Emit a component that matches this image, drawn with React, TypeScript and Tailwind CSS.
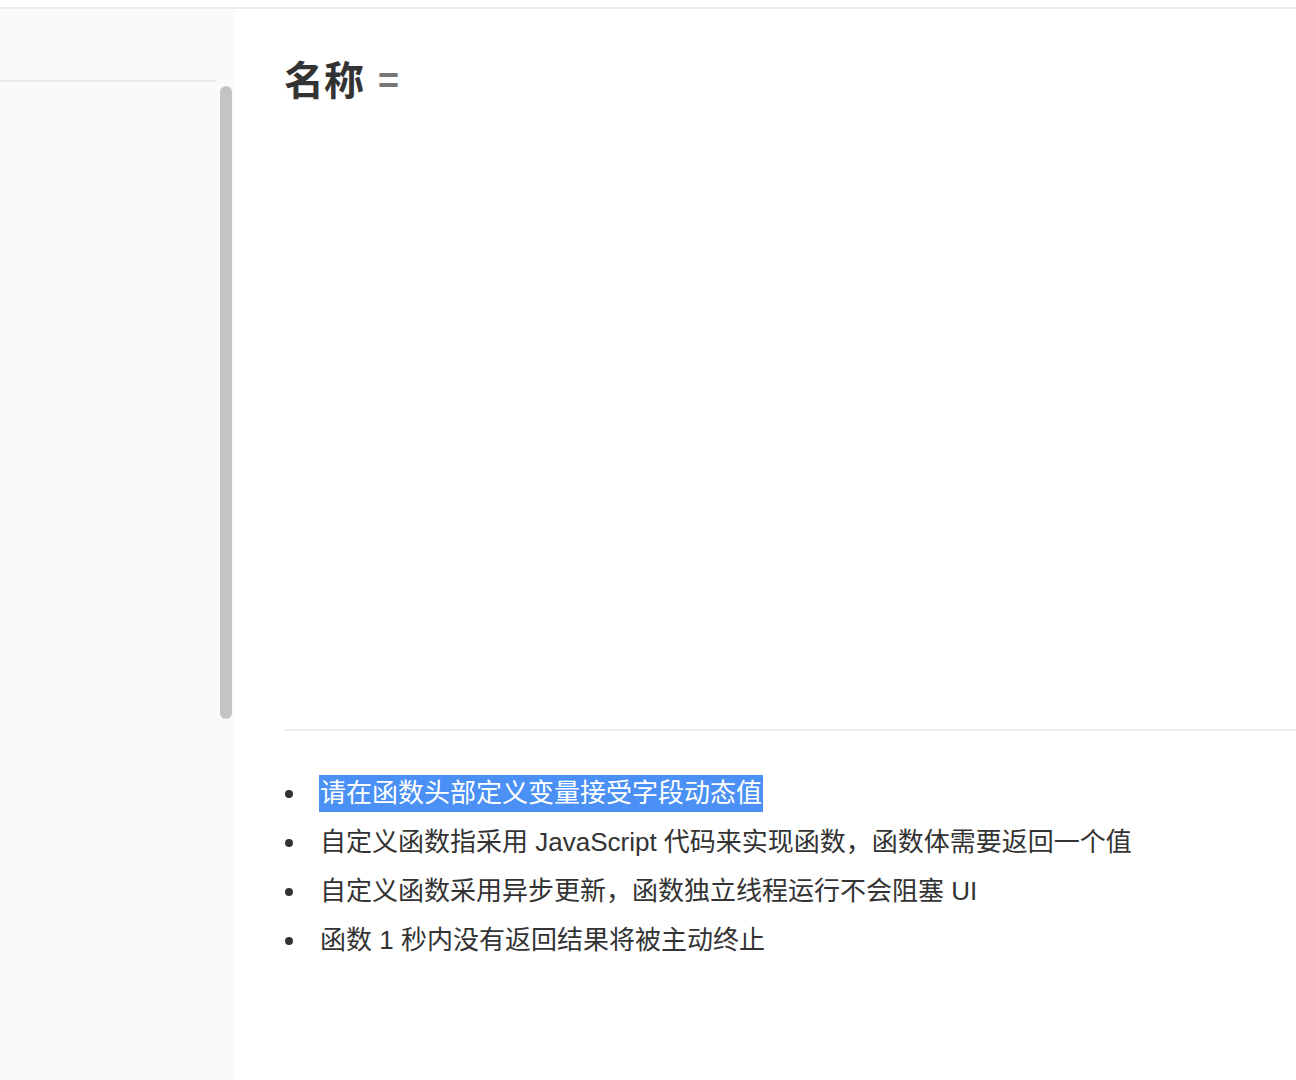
import React from "react";

const tips = [
  "请在函数头部定义变量接受字段动态值",
  "自定义函数指采用 JavaScript 代码来实现函数，函数体需要返回一个值",
  "自定义函数采用异步更新，函数独立线程运行不会阻塞 UI",
  "函数 1 秒内没有返回结果将被主动终止",
];

const App: React.FC = () => {
  return (
    <div
      className="w-[1296px] h-[1080px] bg-white flex flex-col overflow-hidden text-[#333]"
      style={{ fontFamily: '"Helvetica Neue", "Liberation Sans", "Noto Sans CJK SC", sans-serif' }}
    >
      <div className="h-[7px] shrink-0" />
      <div className="h-[2px] bg-[#ebebeb] shrink-0" />

      <div className="flex flex-1 min-h-0">
        {/* sidebar */}
        <div className="w-[235px] shrink-0 bg-[#fafafa] flex flex-col">
          <div className="h-[73px] w-[216px] border-b-2 border-[#ebebeb]" />
          <div className="flex justify-end pr-[3px] pt-[4px]">
            <div className="w-[12px] h-[633px] rounded-full bg-[#c4c4c4]" />
          </div>
        </div>

        {/* main */}
        <div className="flex-1 flex flex-col pl-[49px]">
          <div className="h-[640px] pt-[46px] shrink-0">
            <h1 className="flex items-center gap-[14px] text-[40px] font-bold leading-[52px] text-[#333]">
              名称
              <span className="text-[#777] text-[36px] font-bold">=</span>
            </h1>
          </div>
          <div className="h-[80px] shrink-0" />
          <div className="border-t-2 border-[#eeeeee]" />
          <ul className="pt-[38px] flex flex-col">
            {tips.map((t, i) => (
              <li key={i} className="flex items-center h-[49px] text-[26px]">
                <span className="w-[36px] pl-[1px] flex items-center">
                  <span className="w-[8px] h-[8px] rounded-full bg-[#333]" />
                </span>
                <span
                  className={
                    i === 0
                      ? "bg-[#4a90f5] text-white leading-[37px] px-[1px] -ml-[1px]"
                      : "leading-[37px]"
                  }
                >
                  {t}
                </span>
              </li>
            ))}
          </ul>
        </div>
      </div>
    </div>
  );
};

export default App;
